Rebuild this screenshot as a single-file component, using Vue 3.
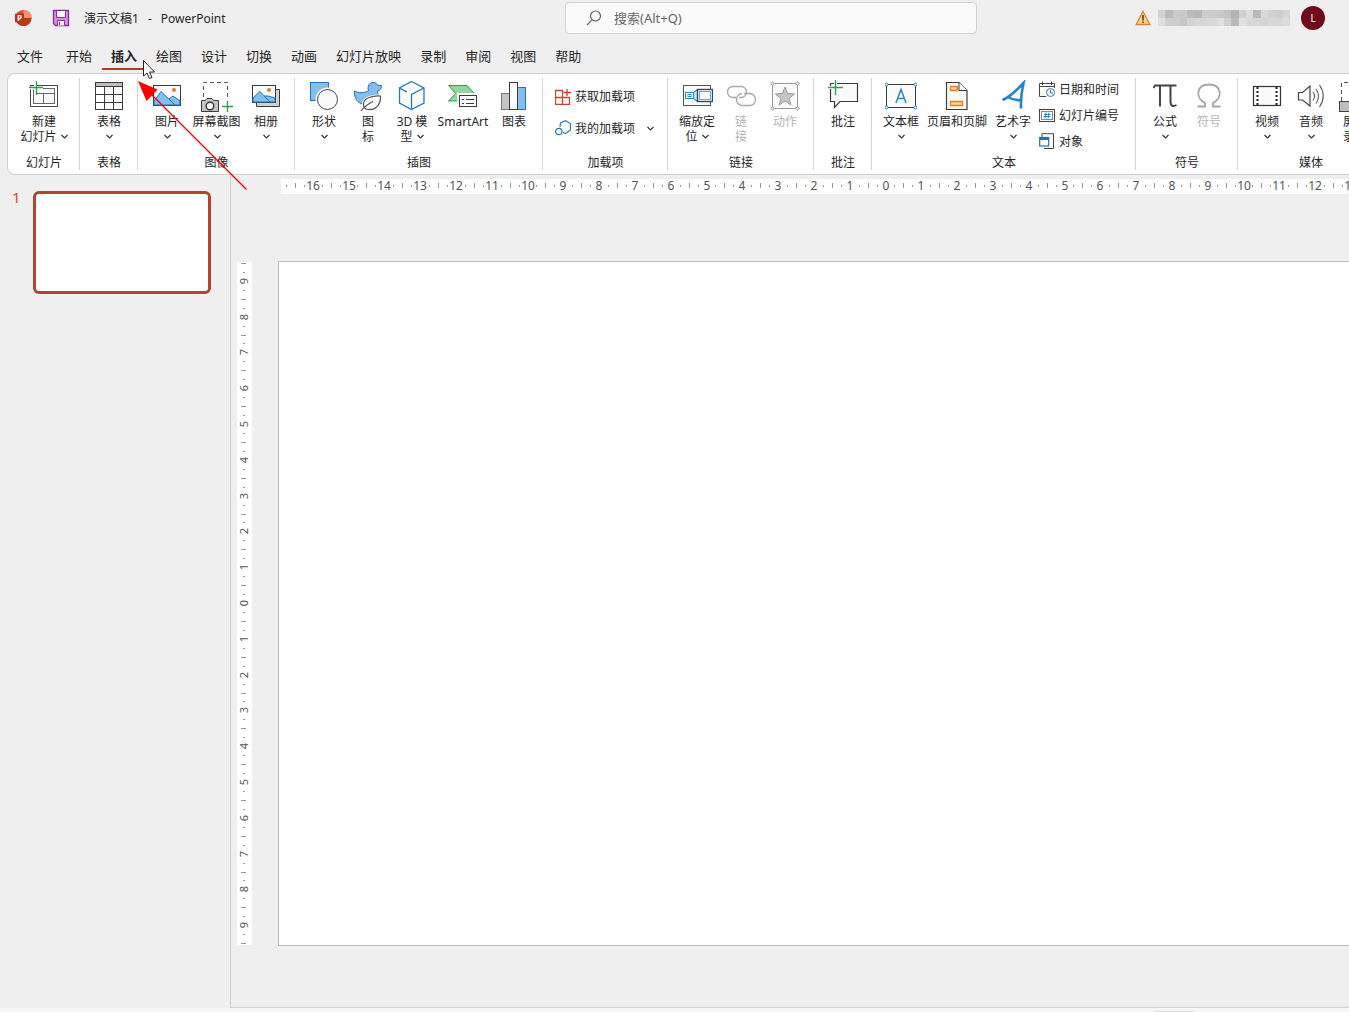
<script setup>
const picture = (w, h) => `
  <rect x="2.5" y="5.5" width="${w}" height="${h}" fill="#fafafa" stroke="#3b3b3b"/>
  <path d="M3 ${h + 1}L10 11.5L${w - 3} ${h + 5}H3Z" fill="#83beec" stroke="#1f73c0"/>
  <path d="M${w - 9} ${h - 1}L${w - 5} 16L${w + 2} ${h + 1}V${h + 5}H${w - 3}Z" fill="#83beec" stroke="#1f73c0"/>
  <circle cx="${w - 4}" cy="10" r="2" fill="#e07b2c"/>`

const icons = {
  newSlide: `<rect x="2.5" y="5.5" width="27" height="21" fill="#fff" stroke="#444"/><rect x="5.5" y="8.5" width="21" height="15" fill="#fafafa" stroke="#666"/><path d="M5 13.5H27M15.5 13.5V24" stroke="#666"/><path d="M0 8H15M7.5 0V16" stroke="#fff" stroke-width="3"/><path d="M1 7.5H15M8.5 1V15" stroke="#2ca04c" stroke-width="1.4"/>`,
  table: `<rect x="2.5" y="2.5" width="27" height="27" fill="#fff" stroke="#3b3b3b"/><rect x="3" y="3" width="26" height="3" fill="#bdbdbd"/><path d="M3 6.5H29M3 14.5H29M3 22.5H29M11.5 6V29M20.5 6V29" stroke="#3b3b3b"/>`,
  picture: picture(27, 20),
  screenshot: `<path d="M2.5 17V2.5H26.5V20" stroke="#555" stroke-dasharray="4 3"/><path d="M.5 20.5H4.5L6 18.5H11L12.5 20.5H17.5V31.5H.5Z" fill="#c4c4c4" stroke="#3b3b3b"/><circle cx="9" cy="26" r="3.8" fill="#fff" stroke="#333" stroke-width="1.4"/><path d="M21 26.5H32M26.5 21V32" stroke="#2ca04c" stroke-width="1.4"/>`,
  album: `<path d="M6.5 22V26.5H29.5V9.5H26" fill="#d2d2d2" stroke="#3b3b3b"/>${picture(23, 17)}`,
  shapes: `<rect x="2.5" y="2.5" width="18" height="18" fill="#83beec" stroke="#1f73c0"/><circle cx="19.5" cy="19.5" r="12" fill="#fff"/><circle cx="19.5" cy="19.5" r="10" fill="#fafafa" stroke="#444"/>`,
  icons: `<path d="M2.5 11C7 13.5 12 13 16.5 10.8C15 6 17.5 2.5 21 2.5C23.5 2.5 25.2 3.8 25.8 5.5H29.5C29.5 8.5 28 10.5 25.5 11C26 14 27 17 24 21C21 24.5 15 25.5 10 24C4 22 2 16 2.5 11Z" fill="#83beec" stroke="#1f73c0"/><path d="M28.5 16C20 15.5 12 18 11.5 24L8.5 31L14 29C22 32 29 26 28.5 16Z" fill="#fff" stroke="#fff" stroke-width="3"/><path d="M28.5 16C20 15.5 12 18 11.5 23.5C11.5 26 12.5 28.5 14 29C22 31.5 29 26 28.5 16ZM9 31C12 27 16 24 21 21.5" fill="#fafafa" stroke="#555" stroke-width="1.2"/>`,
  cube: `<path d="M15.5 1.5L28 8V23L15.5 29.5L3.5 23V8Z" fill="#fafafa"/><path d="M15.5 1.5L28 8V23L15.5 29.5L3.5 23V8ZM3.5 8L11 11.8M28 8L15.5 14.5V29" stroke="#2878bd" stroke-width="1.3"/>`,
  smartart: `<path d="M1.5 5.5H20L28 14V21H1.5L8.5 13.5Z" fill="#91d6a0" stroke="#2ca04c"/><rect x="10" y="13" width="22" height="16" fill="#fff"/><rect x="12.5" y="15.5" width="17" height="11" fill="#fff" stroke="#3b3b3b"/><path d="M15 19.5H17M19 19.5H27M15 23.5H17M19 23.5H27" stroke="#3b3b3b"/>`,
  chart: `<rect x="3.5" y="13.5" width="8" height="16" fill="#c4c4c4" stroke="#777"/><rect x="19.5" y="7.5" width="8" height="22" fill="#83beec" stroke="#1f73c0"/><rect x="11.5" y="2.5" width="8" height="27" fill="#fafafa" stroke="#3b3b3b"/>`,
  zoom: `<rect x="2.5" y="5.5" width="27" height="20" fill="#fafafa" stroke="#555"/><path d="M12.5 12.5L16.5 9.5V21.5L12.5 18.5" fill="#cfe5f7" stroke="#1b4f83"/><rect x="4.5" y="12.5" width="8" height="6" fill="#fff" stroke="#2888d0"/><rect x="7" y="14.5" width="3" height="2" stroke="#2888d0"/><rect x="16.5" y="9.5" width="15" height="12" fill="#fff" stroke="#1b4f83" stroke-width="1.4"/><rect x="18.5" y="11.5" width="11" height="8" fill="#fafafa" stroke="#54ace8"/>`,
  link: `<path d="M11 17.5H8A5.5 5.5 0 0 1 8 6.5H16A5.5 5.5 0 0 1 16 17.5H14M19 13.5H24.5A6 6 0 0 1 24.5 25.5H18A6 6 0 0 1 17 13.5" stroke="#a9a9a9" stroke-width="1.4"/>`,
  action: `<rect x="3.5" y="3.5" width="25" height="25" fill="#fafafa" stroke="#999"/><path d="M16 7L18.5 13.5L25.5 14L20 18.5L22 25L16 21L10 25L12 18.5L6.5 14L13.5 13.5Z" fill="#c6c6c6" stroke="#999"/><g fill="#fff" stroke="#999"><circle cx="3.5" cy="3.5" r="1.5"/><circle cx="28.5" cy="3.5" r="1.5"/><circle cx="3.5" cy="28.5" r="1.5"/><circle cx="28.5" cy="28.5" r="1.5"/></g>`,
  comment: `<path d="M3.5 3.5H30.5V21.5H13L7.5 27.5V21.5H3.5Z" fill="#fafafa" stroke="#3b3b3b" stroke-width="1.2"/><path d="M1 7.5H16M8.5 0V15" stroke="#fff" stroke-width="3"/><path d="M1 7.5H16M8.5 0V15" stroke="#2ca04c" stroke-width="1.4"/>`,
  textbox: `<rect x="1.5" y="4.5" width="29" height="23" fill="#fafafa" stroke="#3b3b3b"/><path d="M11 23L16 9.5L21 23M12.8 18.5H19.2" stroke="#2888d0" stroke-width="1.5"/><g fill="#fff" stroke="#2878bd"><circle cx="1.5" cy="4.5" r="1.5"/><circle cx="30.5" cy="4.5" r="1.5"/><circle cx="1.5" cy="27.5" r="1.5"/><circle cx="30.5" cy="27.5" r="1.5"/></g>`,
  header: `<path d="M5.5 2.5H18L26 10.5V29.5H5.5Z" fill="#fafafa" stroke="#3b3b3b" stroke-width="1.2"/><path d="M18 2.5V10.5H26" fill="#fff" stroke="#3b3b3b"/><path d="M9.5 6.5H16.5V10.5H9.5ZM9.5 21.5H21.5V25.5H9.5Z" fill="#ffd591" stroke="#e8821e" stroke-width="1.4"/>`,
  wordart: `<path d="M5.5 20C12 17.5 20 10 26.5 3C24.5 12 23.5 20 24 28.5M11 17C15 19.5 19 20.5 24 20" stroke="#2486c8" stroke-width="2.6"/>`,
  pi: `<path d="M4.5 8L6 5.5H27.5M11 6V26.5M21.5 6V22C21.5 26 24 27 27.5 25" stroke="#444" stroke-width="2"/>`,
  omega: `<path d="M4.5 26.5H12V23C2 18 3 4.5 16 4.5S30 18 20 23V26.5H27.5" stroke="#a6a6a6" stroke-width="1.8"/>`,
  video: `<rect x="2.5" y="6.5" width="27" height="19" fill="#fafafa" stroke="#333" stroke-width="1.2"/><path d="M6.5 7V25M25.5 7V25" stroke="#222" stroke-width="2" stroke-dasharray="2 2"/>`,
  audio: `<path d="M3.5 12.5H7.5L15 6V26L7.5 20H3.5Z" fill="#fafafa" stroke="#444" stroke-width="1.2"/><path d="M18 12Q21 16 18 20.5M21 9Q26 16 21 23.5M24.5 5Q32 16 24.5 27" stroke="#666" stroke-width="1.2"/>`,
  record: `<path d="M2.5 21V2.5H30V21" stroke="#555" stroke-dasharray="4 3"/><rect x=".5" y="21.5" width="20" height="10" fill="#bdbdbd" stroke="#444"/>`,
  getAddin: `<path d="M.5 2.5H7.5V16.5H.5ZM.5 9.5H14.5V16.5H.5Z" stroke="#c8452a" stroke-width="1.3"/><path d="M12 1V8M8.5 4.5H16" stroke="#c8452a" stroke-width="1.3"/>`,
  myAddin: `<path d="M5 7L5.5 3L10.5 .7L15.5 3.5V10L10.5 13.5L8 12.5" stroke="#2878bd" stroke-width="1.2"/><circle cx="3.8" cy="11.5" r="3.2" stroke="#2878bd" stroke-width="1.2"/>`,
  date: `<path d="M7 15.5H.5V2.5H15.5V7M.5 5.5H15.5M3.5 .5V4M12.5 .5V4" stroke="#444"/><circle cx="11.5" cy="11.5" r="4" fill="#fff" stroke="#2878bd"/><path d="M11.5 9V12H14" stroke="#2878bd"/>`,
  number: `<rect x=".5" y="2.5" width="15" height="12" fill="#fff" stroke="#444"/><rect x="2.5" y="4.5" width="11" height="8" stroke="#888"/><path d="M7 5.5L6 11.5M10 5.5L9 11.5M5 7.5H11.5M4.5 9.5H11" stroke="#2888d0"/>`,
  object: `<path d="M3 4V.7H14.5V15.5H5" stroke="#444"/><rect x=".7" y="4.5" width="9" height="8.5" fill="#fff" stroke="#1f73c0" stroke-width="1.2"/><path d="M1 6H10" stroke="#1f73c0" stroke-width="2"/>`,
}

const tabs = ['文件', '开始', '插入', '绘图', '设计', '切换', '动画', '幻灯片放映', '录制', '审阅', '视图', '帮助']

const groups = [
  { name: '幻灯片', big: [{ icon: 'newSlide', lines: ['新建', '幻灯片'], menu: 'inline', size: 'wide' }] },
  { name: '表格', big: [{ icon: 'table', lines: ['表格'], menu: 'below' }] },
  { name: '图像', big: [
    { icon: 'picture', lines: ['图片'], menu: 'below' },
    { icon: 'screenshot', lines: ['屏幕截图'], menu: 'below', size: 'medium' },
    { icon: 'album', lines: ['相册'], menu: 'below' },
  ] },
  { name: '插图', big: [
    { icon: 'shapes', lines: ['形状'], menu: 'below' },
    { icon: 'icons', lines: ['图', '标'] },
    { icon: 'cube', lines: ['3D 模', '型'], menu: 'inline' },
    { icon: 'smartart', lines: ['SmartArt'], size: 'wide' },
    { icon: 'chart', lines: ['图表'] },
  ] },
  { name: '加载项', kind: 'addins', small: [{ icon: 'getAddin', text: '获取加载项' }, { icon: 'myAddin', text: '我的加载项', menu: true }] },
  { name: '链接', big: [
    { icon: 'zoom', lines: ['缩放定', '位'], menu: 'inline' },
    { icon: 'link', lines: ['链', '接'], disabled: true },
    { icon: 'action', lines: ['动作'], disabled: true },
  ] },
  { name: '批注', big: [{ icon: 'comment', lines: ['批注'] }] },
  { name: '文本', big: [
    { icon: 'textbox', lines: ['文本框'], menu: 'below' },
    { icon: 'header', lines: ['页眉和页脚'], size: 'wider' },
    { icon: 'wordart', lines: ['艺术字'], menu: 'below' },
  ], small: [{ icon: 'date', text: '日期和时间' }, { icon: 'number', text: '幻灯片编号' }, { icon: 'object', text: '对象' }] },
  { name: '符号', big: [
    { icon: 'pi', lines: ['公式'], menu: 'below' },
    { icon: 'omega', lines: ['符号'], disabled: true },
  ] },
  { name: '媒体', big: [
    { icon: 'video', lines: ['视频'], menu: 'below' },
    { icon: 'audio', lines: ['音频'], menu: 'below' },
    { icon: 'record', lines: ['屏幕', '录制'] },
  ] },
]

// Ruler marks: a number every centimetre, a tick at the half, a dot at each quarter.
const CM = 35.8
const marks = (reach, origin, length) => {
  const out = []
  for (let q = -reach * 4; q <= reach * 4; q++) {
    const at = origin + (q * CM) / 4
    if (at < 0 || at > length) continue
    const kind = q % 4 === 0 ? 'number' : q % 2 === 0 ? 'half' : 'quarter'
    out.push({ at: Math.round(at), kind, label: Math.abs(q / 4) })
  }
  return out
}
const across = marks(17, 604.5, 1200).filter((m) => m.at > 4)
const down = marks(9.5, 341, 682)

const shades = [
  '#d3d3d3', '#bcbcbc', '#cbcbcb', '#c9c9c9', '#bbbbbb', '#b8b8b8', '#cdcdcd', '#cccccc', '#cacaca', '#c3c3c3', '#b3b3b3', '#d0d0d0', '#dedede', '#b9b9b9', '#d9d9d9', '#d2d2d2', '#cfcfcf', '#d5d5d5',
  '#dfdfdf', '#d0d0d0', '#cecece', '#c7c7c7', '#d3d3d3', '#d7d7d7', '#d6d6d6', '#dadada', '#e0e0e0', '#cfcfcf', '#bababa', '#e1e1e1', '#d9d9d9', '#d7d7d7', '#d4d4d4', '#d8d8d8', '#d8d8d8', '#dbdbdb',
]
</script>

<template>
  <div class="app">
    <header class="titlebar">
      <div class="title">
        <svg class="logo" width="18" height="18" viewBox="0 0 18 18">
          <circle cx="9.5" cy="9" r="8" fill="#d35230" />
          <path d="M9.5 1A8 8 0 0 1 17.5 9H9.5Z" fill="#ff8f6b" />
          <path d="M1.5 9H17.5A8 8 0 0 1 1.5 9Z" fill="#b83a1d" />
          <rect x="1" y="4.5" width="9" height="9" rx="1" fill="#b83318" />
          <text x="3" y="12" font-size="8" font-weight="700" fill="#fff">P</text>
        </svg>
        <button class="save" aria-label="保存">
          <svg width="18" height="18" viewBox="0 0 18 18" fill="none" stroke="#8a2c9b">
            <path d="M1.5 1.5H16.5V16.5H3.5L1.5 14.5Z" fill="#dc8be6" stroke-width="1.3" />
            <path d="M4.5 1.5H13.5V8.5H4.5ZM5.5 16.5V11.5H12.5V16.5" fill="#fff" />
            <path d="M7.5 13V16" />
          </svg>
        </button>
        <div class="docname"><span>演示文稿1</span><span>-</span><span>PowerPoint</span></div>
      </div>
      <label class="search">
        <svg width="16" height="16" viewBox="0 0 16 16" fill="none" stroke="#666" stroke-width="1.2">
          <circle cx="9.5" cy="6" r="5" /><path d="M6 9.8L1 15" />
        </svg>
        <input type="text" placeholder="搜索(Alt+Q)" aria-label="搜索" />
      </label>
      <div class="account">
        <svg width="16" height="16" viewBox="0 0 16 16">
          <path d="M8 1.5L14.8 14.5H1.2Z" fill="#ffd67a" stroke="#d8853b" stroke-width="1.3" />
          <path d="M8 5V10.5M8 11.5V13" stroke="#333" stroke-width="1.4" />
        </svg>
        <div class="mosaic"><i v-for="(c, i) in shades" :key="i" :style="{ background: c }"></i></div>
        <button class="avatar">L</button>
      </div>
    </header>

    <nav class="tabs">
      <button v-for="t in tabs" :key="t" :class="{ active: t === '插入', file: t === '文件' }">{{ t }}</button>
    </nav>

    <div class="ribbon">
      <section v-for="g in groups" :key="g.name" class="group">
        <div class="tools">
          <button v-for="b in g.big" :key="b.icon" class="big" :class="b.size" :disabled="b.disabled">
            <svg width="32" height="32" viewBox="0 0 32 32" fill="none" v-html="icons[b.icon]"></svg>
            <span v-for="(line, i) in b.lines" :key="line" class="line">{{ line }}<svg
              v-if="b.menu === 'inline' && i === 1" class="chevron" width="7" height="5" viewBox="0 0 7 5"><path d="M.5 1L3.5 4L6.5 1" /></svg></span>
            <span v-if="b.menu === 'below'" class="line"><svg class="chevron alone" width="7" height="5" viewBox="0 0 7 5"><path d="M.5 1L3.5 4L6.5 1" /></svg></span>
          </button>
          <div v-if="g.small" class="stack" :class="g.kind">
            <button v-for="s in g.small" :key="s.icon" class="small">
              <svg width="17" height="17" viewBox="0 0 17 17" fill="none" v-html="icons[s.icon]"></svg>
              <span>{{ s.text }}</span>
              <svg v-if="s.menu" class="chevron" width="7" height="5" viewBox="0 0 7 5"><path d="M.5 1L3.5 4L6.5 1" /></svg>
            </button>
          </div>
        </div>
        <div class="caption">{{ g.name }}</div>
      </section>
    </div>

    <main class="work">
      <aside class="slides">
        <span class="index">1</span>
        <button class="thumb" aria-label="幻灯片 1"></button>
      </aside>
      <div class="stage">
        <svg class="ruler-x" width="1200" height="15">
          <template v-for="m in across" :key="m.at">
            <text v-if="m.kind === 'number'" :x="m.at" y="11">{{ m.label }}</text>
            <path v-else-if="m.kind === 'half'" :d="`M${m.at + 0.5} 4V9`" />
            <path v-else :d="`M${m.at + 0.5} 6V8`" />
          </template>
        </svg>
        <div class="canvas">
          <svg class="ruler-y" width="15" height="683">
            <template v-for="m in down" :key="m.at">
              <text v-if="m.kind === 'number'" :transform="`translate(11 ${m.at}) rotate(-90)`">{{ m.label }}</text>
              <path v-else-if="m.kind === 'half'" :d="`M4 ${m.at + 0.5}H9`" />
              <path v-else :d="`M6 ${m.at + 0.5}H8`" />
            </template>
          </svg>
          <div class="slide"></div>
        </div>
      </div>
    </main>
    <footer class="status"><span></span></footer>

    <svg class="overlay" width="260" height="200" viewBox="0 0 260 200">
      <path d="M150 93L246.5 189.5" stroke="#f00000" stroke-width="1.2" />
      <path d="M138 81L157.5 89.5L146.5 101Z" fill="#f00" />
      <path d="M143.5 60.5V76L147 73L149.5 78.5L152 77.5L149.5 72H154.5Z" fill="#fff" stroke="#222" />
    </svg>
  </div>
</template>

<style>
body {
  margin: 0;
  background: #efefef;
}
</style>

<style scoped>
.app {
  position: relative;
  display: flex;
  flex-direction: column;
  min-height: 100vh;
  overflow: hidden;
  background: #efefef;
  color: #262626;
  font: 12px/15px "Noto Sans", "Noto Sans CJK SC", sans-serif;
}
button {
  padding: 0;
  border: 0;
  background: none;
  color: inherit;
  font: inherit;
}
svg {
  flex: none;
}
.titlebar {
  display: grid;
  grid-template-columns: 565px 412px 1fr;
  align-items: center;
  height: 36px;
}
.title {
  display: flex;
  align-items: center;
  padding-left: 14px;
}
.save {
  display: flex;
  margin: 0 14px 0 20px;
}
.docname {
  display: flex;
  gap: 9px;
}
.search {
  display: flex;
  box-sizing: border-box;
  align-items: center;
  gap: 12px;
  height: 32px;
  padding: 0 20px;
  border: 1px solid #d0d0d0;
  border-radius: 4px;
  background: #fafafa;
}
.search input {
  flex: 1;
  padding: 0;
  border: 0;
  outline: 0;
  background: none;
  font: inherit;
  font-size: 13px;
}
.search input::placeholder {
  color: #666;
}
.account {
  display: flex;
  align-items: center;
  justify-content: flex-end;
  padding-right: 24px;
}
.mosaic {
  display: grid;
  grid-template-columns: repeat(18, 1fr);
  grid-auto-rows: 8px;
  width: 132px;
  margin: 0 11px 0 7px;
}
.avatar {
  width: 24px;
  height: 24px;
  border-radius: 50%;
  background: #700b1c;
  color: #fff;
  font-size: 10px;
}
.tabs {
  display: flex;
  box-sizing: border-box;
  align-items: flex-end;
  gap: 1px;
  height: 37px;
  padding: 0 8px 3px;
}
.tabs button {
  height: 26px;
  padding: 0 9px;
  border-bottom: 2px solid transparent;
  font-size: 13px;
  line-height: 24px;
}
.tabs .file {
  margin-right: 4px;
}
.tabs .active {
  border-color: #b03a22;
  font-weight: 700;
}
.ribbon {
  display: flex;
  height: 100px;
  margin-left: 7px;
  border: 1px solid #d2d2d2;
  border-right: 0;
  border-radius: 8px 0 0 8px;
  background: #fff;
  overflow: hidden;
}
.group {
  display: flex;
  flex: none;
  flex-direction: column;
  box-sizing: border-box;
  height: 92px;
  margin-top: 4px;
  padding: 0 6px 0 7px;
  border-right: 1px solid #d4d4d4;
}
.tools {
  display: flex;
  flex: none;
  height: 77px;
}
.big {
  display: flex;
  flex-direction: column;
  align-items: center;
  width: 44px;
  padding-top: 2px;
  white-space: nowrap;
}
.big.medium {
  width: 55px;
}
.big.wide {
  width: 58px;
}
.big.wider {
  width: 68px;
}
.big > svg {
  margin-bottom: 2px;
}
.big:disabled {
  color: #b5b5b5;
}
.line {
  display: flex;
  align-items: center;
  height: 15px;
}
.chevron {
  margin-left: 4px;
  fill: none;
  stroke: #333;
  stroke-width: 1.2;
}
.chevron.alone {
  margin-left: 1px;
}
.stack {
  display: flex;
  flex-direction: column;
  box-sizing: border-box;
  width: 94px;
  margin-top: -2px;
  padding-left: 4px;
}
.stack.addins {
  width: 111px;
  padding: 4px 0 0 5px;
}
.small {
  display: flex;
  align-items: center;
  gap: 3px;
  height: 26px;
  white-space: nowrap;
}
.addins .small {
  height: 32px;
}
.small .chevron {
  margin-left: 9px;
}
.caption {
  line-height: 16px;
  text-align: center;
}
.work {
  display: flex;
  flex: 1;
}
.slides {
  display: flex;
  flex: none;
  align-items: flex-start;
  box-sizing: border-box;
  width: 231px;
  padding: 16px 0 0 12px;
  border-right: 1px solid #cfcfcf;
}
.index {
  width: 21px;
  color: #c8502f;
  font-size: 15px;
  line-height: 13px;
}
.thumb {
  width: 178px;
  height: 103px;
  border: 3px solid #b0452f;
  border-radius: 6px;
  background: #fff;
}
.stage {
  flex: 1;
  min-width: 0;
  overflow: hidden;
  border-bottom: 1px solid #d2d2d2;
}
.ruler-x,
.ruler-y {
  display: block;
  overflow: visible;
  background: #fff;
}
.ruler-x {
  margin: 4px 0 0 50px;
}
.ruler-x text,
.ruler-y text {
  fill: #555;
  font-size: 12px;
  text-anchor: middle;
}
.ruler-y text {
  font-size: 11px;
}
.ruler-x path,
.ruler-y path {
  stroke: #999;
}
.canvas {
  display: flex;
  align-items: flex-start;
  margin: 67px 0 0 6px;
}
.ruler-y {
  margin: 1px 26px 0 0;
}
.slide {
  flex: none;
  box-sizing: border-box;
  width: 1218px;
  aspect-ratio: 16 / 9;
  border: 1px solid #bdbdbd;
  background: #fff;
}
.status {
  display: flex;
  align-items: flex-end;
  justify-content: flex-end;
  height: 4px;
  background: #f7f7f7;
}
.status span {
  width: 40px;
  height: 1px;
  margin-right: 154px;
  background: #dcdcdc;
}
.overlay {
  position: absolute;
  top: 0;
  left: 0;
  fill: none;
  pointer-events: none;
}
</style>
